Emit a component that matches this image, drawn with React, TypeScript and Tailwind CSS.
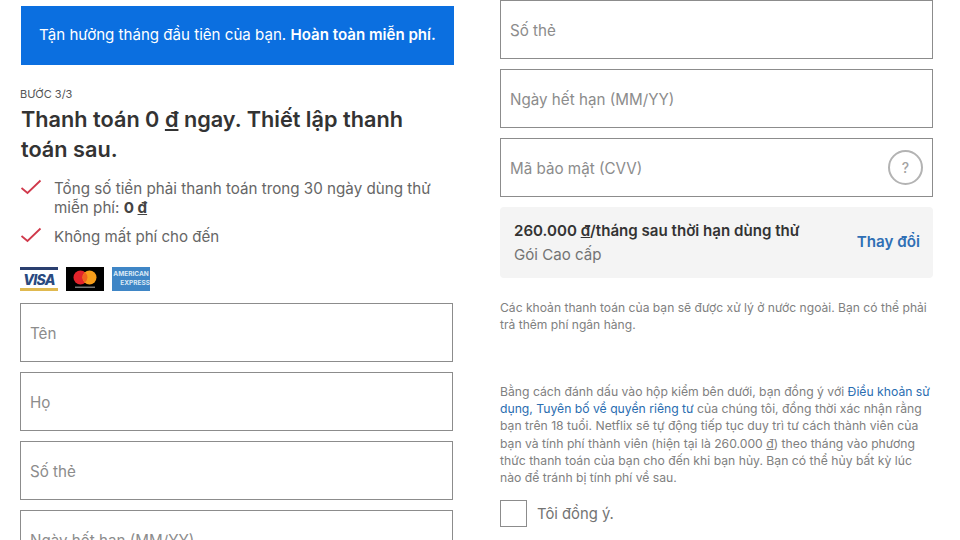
const Check = () => (
  <svg viewBox="0 0 22 16" className="w-[22px] h-[16px] shrink-0" fill="none">
    <path d="M1.5 9 L7.5 14 L20.5 1.5" stroke="#d0394b" strokeWidth="1.8" />
  </svg>
);

const Field = ({ label, help }: { label: string; help?: boolean }) => (
  <div className="h-[59px] shrink-0 border border-[#8c8c8c] bg-white flex items-center justify-between pl-[9px] pr-[9px] text-[15.2px] text-[#8c8c8c]">
    <span className="pt-[3px]">{label}</span>
    {help && (
      <span className="w-[35px] h-[35px] rounded-full border-2 border-[#b3b3b3] flex items-center justify-center text-[14px] font-medium text-[#a3a3a3]">
        ?
      </span>
    )}
  </div>
);

const Cards = () => (
  <div className="flex gap-[8px] mt-[21px]">
    <div className="w-[38px] h-[24px] bg-white border-t-[3px] border-b-[3px] border-t-[#2a3f6f] border-b-[#e0b94f] flex items-center justify-center text-[14px] font-extrabold italic text-[#2a4a80] tracking-tighter">
      VISA
    </div>
    <div className="w-[38px] h-[24px] bg-black flex items-center justify-center">
      <svg viewBox="0 0 38 24" className="w-[38px] h-[24px]">
        <circle cx="14.5" cy="10.5" r="7" fill="#e3242b" />
        <circle cx="23.5" cy="10.5" r="7" fill="#f79e1b" />
        <path d="M19 5.2a7 7 0 0 1 0 10.6a7 7 0 0 1 0-10.6z" fill="#f2641f" />
        <rect x="9" y="19.5" width="20" height="1.5" fill="#777" />
      </svg>
    </div>
    <div className="w-[38px] h-[24px] bg-[#3f86c6] flex flex-col items-center justify-center text-[6.5px] leading-[9px] font-bold text-[#dbe9f5] overflow-hidden whitespace-nowrap">
      <span>AMERICAN</span>
      <span className="self-end">EXPRESS</span>
    </div>
  </div>
);

export default function App() {
  return (
    <div className="w-[960px] h-[540px] overflow-hidden bg-white flex font-['Inter','Noto_Sans',sans-serif] text-[#333]">
      <div className="w-[433px] ml-[20px] flex flex-col">
        <div className="mt-[6px] ml-[1px] w-[433px] h-[59px] shrink-0 bg-[#0b6fe0] text-white text-[15.1px] flex items-center justify-center">
          <span>
            Tận hưởng tháng đầu tiên của bạn. <b className="font-semibold">Hoàn toàn miễn phí.</b>
          </span>
        </div>
        <div className="mt-[22px] text-[11px] leading-[14px] text-[#555]">BƯỚC 3/3</div>
        <h1 className="mt-[3px] ml-[1px] text-[21.7px] leading-[30px] font-semibold text-[#333] w-[400px]">
          Thanh toán 0 <u>đ</u> ngay. Thiết lập thanh toán sau.
        </h1>
        <div className="mt-[15px] flex gap-[12px] text-[15.2px] leading-[19px] text-[#666]">
          <Check />
          <span className="w-[380px]">
            Tổng số tiền phải thanh toán trong 30 ngày dùng thử miễn phí: <b className="font-bold text-[#444]">0 <u>đ</u></b>
          </span>
        </div>
        <div className="mt-[10px] flex gap-[12px] text-[15.1px] leading-[19px] text-[#666]">
          <Check />
          <span>Không mất phí cho đến</span>
        </div>
        <Cards />
        <div className="mt-[12px] flex flex-col gap-[10px]">
          <Field label="Tên" />
          <Field label="Họ" />
          <Field label="Số thẻ" />
          <Field label="Ngày hết hạn (MM/YY)" />
        </div>
      </div>
      <div className="w-[433px] ml-[47px] flex flex-col">
        <div className="flex flex-col gap-[10px]">
          <Field label="Số thẻ" />
          <Field label="Ngày hết hạn (MM/YY)" />
          <Field label="Mã bảo mật (CVV)" help />
        </div>
        <div className="mt-[10px] h-[71px] shrink-0 bg-[#f4f4f4] rounded-[4px] flex items-center justify-between pl-[14px] pr-[13px]">
          <div>
            <div className="text-[15.1px] leading-[24px] font-semibold text-[#333]">
              260.000 <u>đ</u>/tháng sau thời hạn dùng thử
            </div>
            <div className="text-[15.1px] leading-[24px] text-[#737373]">Gói Cao cấp</div>
          </div>
          <span className="text-[15.2px] font-semibold text-[#2f6fb5]">Thay đổi</span>
        </div>
        <p className="mt-[21px] text-[12.1px] leading-[17px] text-[#808080]">
          Các khoản thanh toán của bạn sẽ được xử lý ở nước ngoài. Bạn có thể phải trả thêm phí ngân hàng.
        </p>
        <p className="mt-[50px] text-[12.2px] leading-[17.2px] text-[#808080]">
          Bằng cách đánh dấu vào hộp kiểm bên dưới, bạn đồng ý với{" "}
          <span className="text-[#2a6db0]">Điều khoản sử dụng, Tuyên bố về quyền riêng tư</span> của chúng tôi, đồng thời xác nhận rằng bạn trên 18 tuổi. Netflix sẽ tự động tiếp tục duy trì tư cách thành viên của bạn và tính phí thành viên (hiện tại là 260.000 <u>đ</u>) theo tháng vào phương thức thanh toán của bạn cho đến khi bạn hủy. Bạn có thể hủy bất kỳ lúc nào để tránh bị tính phí về sau.
        </p>
        <div className="mt-[14px] flex items-center gap-[10px]">
          <div className="w-[27px] h-[27px] border border-[#8c8c8c]" />
          <span className="text-[14.8px] text-[#737373]">Tôi đồng ý.</span>
        </div>
      </div>
    </div>
  );
}
